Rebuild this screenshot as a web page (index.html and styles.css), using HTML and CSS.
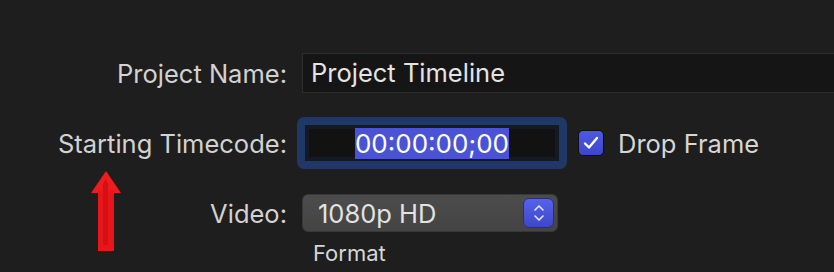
FILE: index.html
```html
<!DOCTYPE html>
<html lang="en">
<head>
  <meta charset="UTF-8">
  <title>Project Settings</title>
  <link rel="stylesheet" href="styles.css">
</head>
<body>
  <div id="settings">
    <div class="row row-name">
      <div class="label">Project Name:</div>
      <div class="name-field">Project Timeline</div>
    </div>

    <div class="row row-tc">
      <div class="label">Starting Timecode:</div>
      <div class="tc-field">
        <div class="tc-inner"><span class="tc-sel">00:00:00;00</span></div>
      </div>
      <div class="check">
        <span class="box">
          <svg width="16" height="14" viewBox="0 0 16 14"><path d="M2 7.5 L6 11.5 L14 2" fill="none" stroke="#fff" stroke-width="2.4" stroke-linecap="round" stroke-linejoin="round"/></svg>
        </span>
        <span>Drop Frame</span>
      </div>
    </div>

    <div class="row row-video">
      <div class="label">Video:</div>
      <div class="popup">
        <span>1080p HD</span>
        <span class="stepper">
          <svg width="14" height="22" viewBox="0 0 14 22"><path d="M3 8 L7 4 L11 8 M3 14 L7 18 L11 14" fill="none" stroke="#e6e8ff" stroke-width="1.6" stroke-linecap="round" stroke-linejoin="round"/></svg>
        </span>
      </div>
    </div>

    <div class="row row-format">
      <div class="label"></div>
      <div class="sub">Format</div>
    </div>
  </div>

  <!-- annotation arrow -->
  <svg class="arrow" width="40" height="90" viewBox="0 0 40 90">
    <polygon points="18,1 3,23 33,23" fill="#ee1b1f"/>
    <rect x="10" y="20" width="16" height="61" fill="#e8161b"/>
    <rect x="15" y="14" width="5" height="61" fill="#d41015"/>
    <polygon points="17.5,9 14,16 21,16" fill="#d41015"/>
  </svg>
</body>
</html>
```

FILE: styles.css
```css
/* dark macOS style project sheet */
body {
  margin: 0;
  background-color: #1e1e1e;
  color: #d6d6d6;
  font-family: Inter, "Open Sans", sans-serif;
  font-size: 25.5px;
  height: 272px;
  overflow: hidden;
}
#settings {
  padding-top: 53px;
}
.row {
  display: flex;
  align-items: center;
  gap: 15px;
}
.label {
  width: 287px;
  flex-shrink: 0;
  text-align: right;
  color: #d2d2d2;
}
.row-name {
  height: 40px;
}
.row-tc {
  height: 52px;
  margin-top: 24px;
}
.row-video {
  height: 38px;
  margin-top: 25px;
}
.row-format {
  margin-top: 8px;
}
.name-field {
  flex: 1;
  height: 40px;
  box-sizing: border-box;
  border: 1px solid #2e2e2e;
  border-right: none;
  background-color: #151515;
  color: #e4e4e4;
  padding-left: 8px;
  line-height: 38px;
}
.tc-field {
  width: 270px;
  height: 52px;
  margin-left: -5px;
  box-sizing: border-box;
  border: 8px solid #1f3865;
  border-radius: 7px;
  background-color: #141a24;
  padding: 4px;
}
.tc-inner {
  height: 100%;
  background-color: #121212;
  display: flex;
  justify-content: center;
  align-items: center;
  font-size: 26px;
  color: #ffffff;
}
.tc-sel {
  background-color: #4a53d6;
  line-height: 31px;
}
.check {
  display: flex;
  align-items: center;
  margin-left: -4px;
  gap: 14px;
  color: #d6d6d6;
}
.box {
  width: 26px;
  height: 26px;
  box-sizing: border-box;
  border: 1px solid #101010;
  border-radius: 5px;
  background: linear-gradient(#4d58e6, #3e46c8);
  display: flex;
  justify-content: center;
  align-items: center;
}
.popup {
  width: 256px;
  height: 38px;
  box-sizing: border-box;
  border-radius: 6px;
  background: linear-gradient(#4c4c4c, #444444);
  border: 1px solid #383838;
  display: flex;
  align-items: center;
  justify-content: space-between;
  padding: 0 3px 0 15px;
  color: #e2e2e2;
}
.stepper {
  width: 31px;
  height: 30px;
  box-sizing: border-box;
  border: 1px solid #2a2f7a;
  border-radius: 6px;
  background: linear-gradient(#5662ec, #3e47c8);
  display: flex;
  justify-content: center;
  align-items: center;
}
.sub {
  padding-left: 11px;
  font-size: 22px;
  color: #d6d6d6;
}
.arrow {
  position: absolute;
  left: 88px;
  top: 170px;
}
```
